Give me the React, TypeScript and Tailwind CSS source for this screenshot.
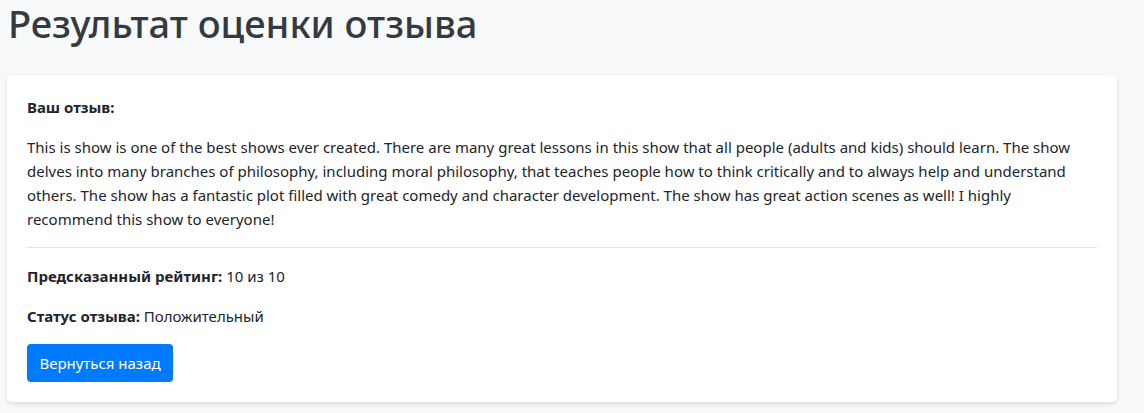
export default function App() {
  return (
    <div
      className="min-h-screen bg-[#f8f9fa] pl-[7px] text-[#212529]"
      style={{ fontFamily: '"Noto Sans", sans-serif' }}
    >
      <h1 className="pl-[1px] text-[38px] font-medium leading-[46px] text-[#343a40]">
        Результат оценки отзыва
      </h1>
      <div className="mt-[29px] w-[1110px] rounded-[5px] bg-white p-5 shadow-[0_2px_5px_rgba(0,0,0,0.12)] text-[15px] leading-6">
        <p className="font-bold">Ваш отзыв:</p>
        <p className="mt-4">
          This is show is one of the best shows ever created. There are many great lessons in this show that all people
          (adults and kids) should learn. The show delves into many branches of philosophy, including moral philosophy,
          that teaches people how to think critically and to always help and understand others. The show has a fantastic
          plot filled with great comedy and character development. The show has great action scenes as well! I highly
          recommend this show to everyone!
        </p>
        <hr className="my-4 border-t border-[#e5e5e5]" />
        <p>
          <span className="font-bold">Предсказанный рейтинг:</span> 10 из 10
        </p>
        <p className="mt-4">
          <span className="font-bold">Статус отзыва:</span> Положительный
        </p>
        <button className="mt-4 flex h-[38px] w-[146px] items-center justify-center rounded-[4px] bg-[#007bff] text-[15px] text-white">
          Вернуться назад
        </button>
      </div>
    </div>
  );
}
